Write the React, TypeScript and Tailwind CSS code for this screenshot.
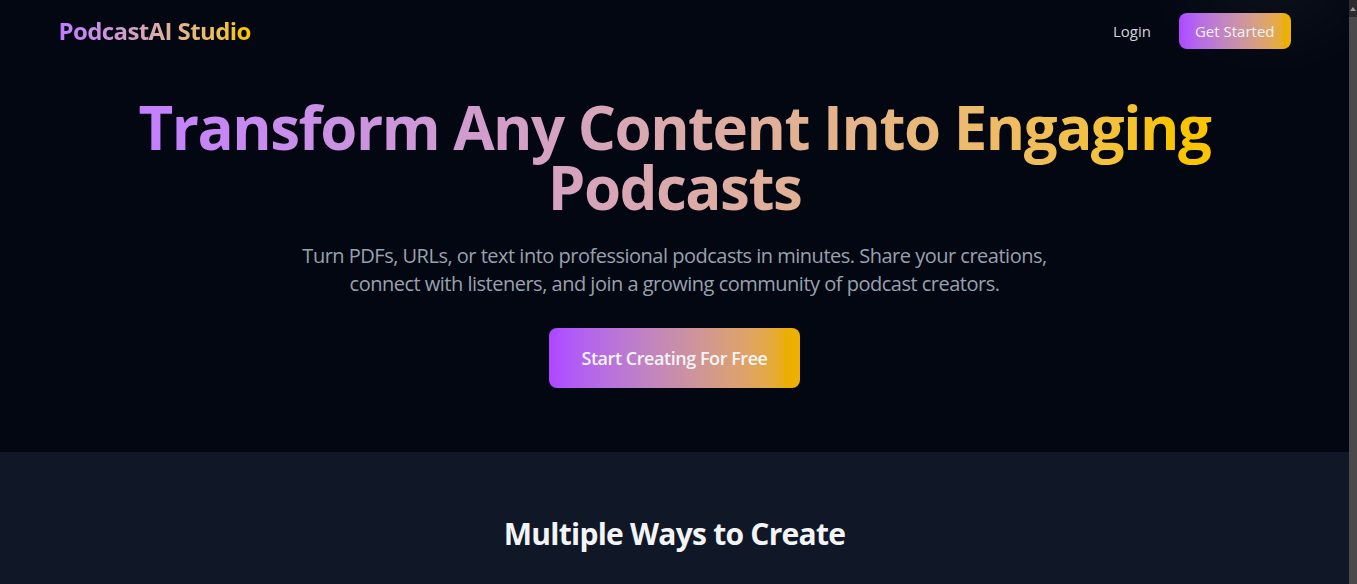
import React from 'react';

const font = { fontFamily: '"Open Sans", "Noto Sans", sans-serif' };

const Nav: React.FC = () => (
  <nav className="max-w-7xl mx-auto px-6 h-[62px] flex items-center justify-between">
    <span className="text-2xl tracking-tight font-bold bg-linear-to-r from-purple-400 to-yellow-400 bg-clip-text text-transparent">
      PodcastAI Studio
    </span>
    <div className="flex items-center gap-7">
      <button className="text-gray-300 text-[15px]">Login</button>
      <button className="h-9 px-4 rounded-lg bg-linear-to-r from-purple-500 to-yellow-500 text-gray-100 text-[15px]">
        Get Started
      </button>
    </div>
  </nav>
);

const Hero: React.FC = () => (
  <section className="pt-[35px] pb-16 px-6 text-center">
    <h1 className="text-6xl leading-[60px] tracking-tight font-bold max-w-6xl mx-auto bg-linear-to-r from-purple-400 to-yellow-400 bg-clip-text text-transparent">
      Transform Any Content Into Engaging Podcasts
    </h1>
    <p className="mt-[25px] text-xl leading-7 tracking-tight text-gray-400 max-w-3xl mx-auto">
      Turn PDFs, URLs, or text into professional podcasts in minutes. Share your creations,
      connect with listeners, and join a growing community of podcast creators.
    </p>
    <button className="mt-[30px] px-8 py-4 rounded-lg bg-linear-to-r from-purple-500 to-yellow-500 text-gray-100 text-lg tracking-tight font-semibold">
      Start Creating For Free
    </button>
  </section>
);

const Scrollbar: React.FC = () => (
  <div className="w-2 shrink-0 bg-[#2c2c2c] flex flex-col">
    <div className="h-[17px] flex items-center justify-center">
      <div className="w-0 h-0 border-x-[3px] border-x-transparent border-b-[4px] border-b-[#9a9a9a]" />
    </div>
    <div className="flex-1 bg-[#4a4a4a]" />
  </div>
);

export default function App() {
  return (
    <div className="flex h-screen overflow-hidden bg-gray-950" style={font}>
      <main className="flex-1 min-w-0 text-white">
        <div className="relative overflow-hidden">
          <div className="absolute -top-14 right-0 w-40 h-20 rounded-full bg-white/5 blur-2xl" />
          <Nav />
          <Hero />
        </div>
        <section className="bg-gray-900 pt-16 pb-40 px-6">
          <h2 className="text-3xl tracking-tight font-bold text-center text-gray-100">Multiple Ways to Create</h2>
        </section>
      </main>
      <Scrollbar />
    </div>
  );
}
